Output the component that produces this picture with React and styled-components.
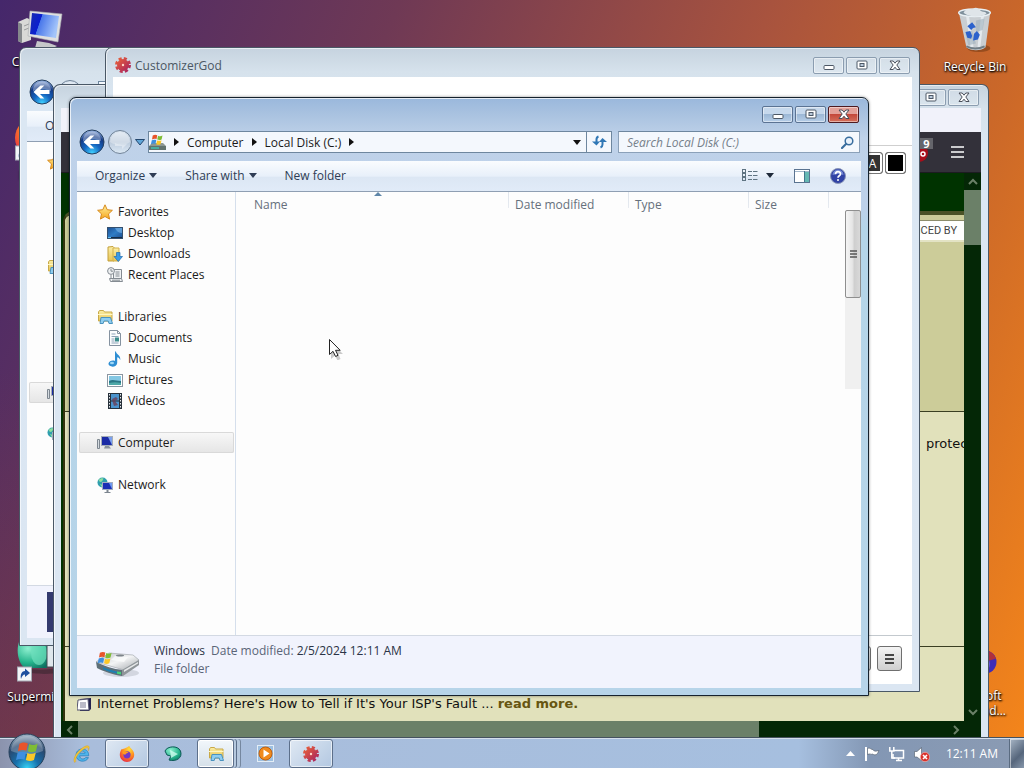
import React from "react";
import styled, { createGlobalStyle, css } from "styled-components";

const GlobalStyle = createGlobalStyle`
  * {
    box-sizing: border-box;
  }

  body {
    margin: 0;
    overflow: hidden;
    font-family: "Open Sans", "Noto Sans", sans-serif;
    font-size: 12px;
    color: #1b1b1b;
  }

  button, input {
    font: inherit;
    color: inherit;
    margin: 0;
    padding: 0;
    border: 0;
    background: none;
  }

  ul {
    list-style: none;
    margin: 0;
    padding: 0;
  }

  svg {
    display: block;
    flex: none;
  }
`;

const Screen = styled.div`
  height: 100vh;
  display: flex;
  flex-direction: column;
  background: linear-gradient(112deg, #45276b 0%, #6f3955 30%, #a8533e 58%, #cb6829 78%, #f5861a 100%);
`;

const Desktop = styled.main`
  flex: 1;
  position: relative;
  overflow: hidden;
  background: linear-gradient(to bottom, transparent 50%, rgba(130, 60, 50, 0.35)) left / 60px 100% no-repeat;
`;

/* desktop icons */

const Shortcut = styled.button`
  position: absolute;
  top: ${(p) => p.$top}px;
  left: ${(p) => p.$left};
  right: ${(p) => p.$right};
  width: 74px;
  display: flex;
  flex-direction: column;
  align-items: center;
  gap: 6px;
  color: #fff;
  line-height: 15px;
  text-align: center;
  white-space: nowrap;
  text-shadow: 1px 1px 2px #000, 0 1px 2px #000;
`;

/* windows */

const Frame = styled.section`
  position: absolute;
  display: flex;
  flex-direction: column;
  top: ${(p) => p.$inset[0]}px;
  right: ${(p) => p.$inset[1]}px;
  bottom: ${(p) => p.$inset[2]}px;
  left: ${(p) => p.$inset[3]}px;
  padding: 0 7px ${(p) => (p.$docked ? 0 : 7)}px;
  border: 1px solid #4a5866;
  border-bottom-width: ${(p) => (p.$docked ? 0 : 1)}px;
  border-radius: 7px 7px 0 0;
  background: linear-gradient(#c6d3df, #d6e2ec 24px, #dbe7f3 60px, #dbe6f2);
  box-shadow: inset 1px 1px 0 rgba(255, 255, 255, 0.6);

  ${(p) =>
    p.$active &&
    css`
      border-color: #16222e;
      background: linear-gradient(#9ab8dc, #a9c2e0 16px, #bfd2e9 40px, #bdd1ea 110px, #b5d5e8 130px, #b7d4e9);
      box-shadow: inset 1px 1px 0 rgba(255, 255, 255, 0.75), 0 0 3px rgba(0, 0, 0, 0.45);
    `}
`;

const Caption = styled.header`
  height: ${(p) => p.$height}px;
  padding: ${(p) => p.$pad}px 2px 0;
  display: flex;
  align-items: flex-start;
  gap: 2px;
`;

const CaptionTitle = styled.h1`
  flex: 1;
  display: flex;
  align-items: center;
  gap: 4px;
  height: 16px;
  margin: 0;
  font-size: 12px;
  font-weight: 400;
  color: #4b5763;
`;

const CaptionButton = styled.button`
  width: 31px;
  height: 17px;
  display: flex;
  align-items: center;
  justify-content: center;
  border: 1px solid ${(p) => (p.$active ? "#5b7393" : "#8b9db0")};
  border-radius: 2px;
  background: ${(p) =>
    p.$active ? "linear-gradient(#c6d8ec 45%, #9db8d6 50%, #b6cee8)" : "rgba(255, 255, 255, 0.15)"};
  box-shadow: inset 0 0 0 1px rgba(255, 255, 255, 0.45);

  ${(p) =>
    p.$danger &&
    css`
      border-color: #4d1a20;
      background: linear-gradient(#e3a199 45%, #c4493b 50%, #d4705c);
    `}
`;

/* explorer */

const NavRow = styled.div`
  height: 24px;
  margin-bottom: 7px;
  padding: 0 1px 0 2px;
  display: flex;
  align-items: center;
`;

const NavButton = styled.button`
  height: 26px;
  margin-right: 2px;
`;

const AddressBar = styled.div`
  flex: 1;
  height: 22px;
  display: flex;
  align-items: center;
  margin: 0 6px 0 3px;
  border: 1px solid #6e879f;
  background: #f4f8fd;
`;

const Crumb = styled.button`
  display: flex;
  align-items: center;
  gap: 8px;
  padding-left: 8px;
  white-space: nowrap;
`;

const AddressEnd = styled.div`
  flex: 1;
  display: flex;
  justify-content: flex-end;
  padding-right: 5px;
`;

const RefreshButton = styled.button`
  width: 25px;
  height: 20px;
  display: flex;
  align-items: center;
  justify-content: center;
  border-left: 1px solid #6e879f;
`;

const SearchBox = styled.label`
  width: 242px;
  height: 22px;
  display: flex;
  align-items: center;
  padding: 0 5px 0 8px;
  border: 1px solid #8ba1b9;
  border-top-color: #6e879f;
  background: #f4f8fd;
`;

const SearchInput = styled.input`
  flex: 1;
  min-width: 0;
  outline: 0;

  &::placeholder {
    color: #76808a;
    font-style: italic;
    opacity: 1;
  }
`;

const CommandBar = styled.div`
  height: 31px;
  padding: 0 15px 1px 18px;
  display: flex;
  align-items: center;
  gap: 28px;
  border-bottom: 1px solid #8f9fb3;
  background: linear-gradient(#fafcfe, #e8f0fa 50%, #dce7f4 55%, #e1ebf8);
  color: #2f3d55;
`;

const Command = styled.button`
  display: flex;
  align-items: center;
  gap: 4px;
  white-space: nowrap;
`;

const CommandIcons = styled.div`
  margin-left: auto;
  display: flex;
  align-items: center;
  gap: 20px;
`;

const ExplorerBody = styled.div`
  flex: 1;
  min-height: 0;
  display: flex;
  background: #fdfdfd;
`;

const Sidebar = styled.nav`
  width: 159px;
  padding: 9px 1px 0 2px;
  border-right: 1px solid #d5dfec;
  overflow: hidden;
`;

const Group = styled.ul`
  margin-bottom: 21px;
`;

const Place = styled.button`
  width: 100%;
  height: 21px;
  display: flex;
  align-items: center;
  gap: 5px;
  padding-left: ${(p) => (p.$nested ? 28 : 18)}px;
  white-space: nowrap;

  ${(p) =>
    p.$selected &&
    css`
      border-radius: 2px;
      box-shadow: inset 0 0 0 1px #d9d9d9;
      background: linear-gradient(#f8f8f8, #e5e5e5);
    `}
`;

const FileArea = styled.div`
  flex: 1;
  min-width: 0;
`;

const FileTable = styled.table`
  width: 593px;
  table-layout: fixed;
  border-collapse: collapse;
`;

const HeadCell = styled.th`
  width: ${(p) => p.$width}px;
  height: 26px;
  padding: 0 0 1px ${(p) => p.$pad}px;
  font-weight: 400;
  text-align: left;
  color: #66707c;
  background: linear-gradient(#dfe5ec, #e6eaf0) right top / 1px 16px no-repeat;
`;

const SortMark = styled.svg`
  position: absolute;
  margin: -4px 0 0 120px;
`;

const ScrollTrack = styled.div`
  width: 16px;
  height: 179px;
  margin-top: 18px;
  background: #f0f0f0;
`;

const ScrollThumb = styled.div`
  height: 88px;
  display: flex;
  align-items: center;
  justify-content: center;
  border: 1px solid #8f8f8f;
  border-radius: 2px;
  background: linear-gradient(to right, #f5f5f5, #e6e6e6 45%, #cfcfcf 60%, #d9d9d9);
`;

const Details = styled.footer`
  height: 53px;
  padding: 6px 18px 0;
  display: flex;
  gap: 14px;
  border-top: 1px solid #d3d9e3;
  background: #f1f3fd;
  color: #5a6578;
  line-height: 18px;
`;

const DetailText = styled.div`
  white-space: nowrap;
`;

const DetailValue = styled.span`
  color: #2b3346;
  margin-right: 6px;
`;

const Thumbnail = styled.div`
  width: 44px;
  height: 40px;
  margin-left: 2px;
  background: #333a6e;
`;

/* customizer */

const Customizer = styled.div`
  flex: 1;
  display: flex;
  flex-direction: column;
  background: #fff;
`;

const CustomizerTop = styled.div`
  height: 69px;
  border-bottom: 1px solid #cfcfcf;
`;

const Swatches = styled.div`
  flex: 1;
  display: flex;
  justify-content: flex-end;
  gap: 2px;
  padding: 6px 6px 0;
`;

const Swatch = styled.button`
  width: 21px;
  height: 22px;
  border: 1px solid #777;
  border-radius: 3px;
  box-shadow: inset 0 0 0 2px #fff;
  background: ${(p) => p.$fill};
  color: #fff;
`;

const CustomizerFoot = styled.div`
  height: 49px;
  display: flex;
  justify-content: flex-end;
  gap: 6px;
  padding: 10px 10px 0;
  border-top: 1px solid #c3c9ce;
`;

const FootButton = styled.button`
  width: 25px;
  height: 25px;
  display: flex;
  align-items: center;
  justify-content: center;
  border: 1px solid #6f6f6f;
  border-radius: 3px;
  background: linear-gradient(#f4f4f4, #cfcfcf);
`;

/* browser */

const TabStrip = styled.div`
  height: 24px;
  background: #f1f2fa;
`;

const BrowserBar = styled.div`
  height: 41px;
  display: flex;
  align-items: center;
  justify-content: flex-end;
  gap: 18px;
  padding-right: 17px;
  border-bottom: 1px solid #1d1c22;
  background: #33313a;
`;

const Extension = styled.div`
  position: relative;
  width: 24px;
  height: 24px;
`;

const Count = styled.span`
  position: absolute;
  top: -2px;
  right: 0;
  width: 13px;
  background: #65656b;
  color: #fff;
  font-size: 11px;
  font-weight: 700;
  line-height: 11px;
  text-align: center;
`;

const Viewport = styled.div`
  flex: 1;
  min-height: 0;
  display: grid;
  grid-template: minmax(0, 1fr) 17px / minmax(0, 1fr) 17px;
  font-family: "DejaVu Sans", sans-serif;
  font-size: 13px;
  color: #111;
`;

const Page = styled.article`
  display: flex;
  flex-direction: column;
  background: #003300;
`;

const Masthead = styled.div`
  height: 38px;
`;

const PageBody = styled.div`
  flex: 1;
  display: flex;
  flex-direction: column;
  margin-left: 2px;
  border-top: 4px solid #4b5226;
  border-left: 2px solid #33330f;
  border-top-left-radius: 10px;
  background: #e1e1bb;
`;

const Promo = styled.div`
  height: 197px;
  padding-top: 5px;
  border-bottom: 1px solid #3a3f22;
  border-top-left-radius: 8px;
  background: #cccc99;
`;

const Sponsor = styled.div`
  height: 22px;
  padding-right: 7px;
  margin-left: 30px;
  border-top: 1px solid #8d8d6c;
  border-bottom: 2px solid #e3e3c4;
  background: #fff;
  color: #444;
  font: 400 11px/20px Roboto, sans-serif;
  text-align: right;
`;

const Story = styled.div`
  flex: 1;
  padding-top: 22px;
  border-bottom: 1px solid #3a3f22;
  line-height: 20px;
  text-align: right;
  white-space: nowrap;
  overflow: hidden;
`;

const StoryEnd = styled.span`
  display: inline-block;
  width: 38px;
  text-align: left;
`;

const Headline = styled.div`
  height: 74px;
  display: flex;
  align-items: flex-end;
  gap: 5px;
  padding: 0 0 8px 12px;
  line-height: 18px;
  white-space: nowrap;
`;

const ReadMore = styled.a`
  color: #665511;
  font-weight: 700;
  text-decoration: none;
`;

const PageScroll = styled.div`
  display: flex;
  flex-direction: ${(p) => (p.$across ? "row" : "column")};
  align-items: center;
  justify-content: space-between;
  grid-column: ${(p) => (p.$across ? "1 / 3" : "2")};
  background: #042706;
  padding: ${(p) => (p.$across ? "0 20px 0 4px" : "4px 0")};
`;

const PageThumb = styled.div`
  background: #6b8068;
  align-self: stretch;
  flex: ${(p) => p.$flex};
  margin: ${(p) => p.$margin};
`;

/* taskbar */

const Taskbar = styled.footer`
  position: relative;
  height: 30px;
  display: flex;
  align-items: stretch;
  padding-left: 59px;
  border-top: 1px solid #d3deeb;
  background: linear-gradient(to right, #8b93ad, #a9bddb 8%, #a6bfdf 78%, #8397b4 85%, #8b9bb3);
  box-shadow: 0 -1px 0 #45525f;
`;

const StartButton = styled.button`
  position: absolute;
  left: 8px;
  top: -6px;
`;

const TaskList = styled.div`
  flex: 1;
  display: flex;
  gap: 2px;
`;

const Task = styled.button`
  width: 44px;
  display: flex;
  align-items: center;
  justify-content: center;
  border-radius: 3px;

  ${(p) =>
    p.$open &&
    css`
      border: 1px solid #5c6f8a;
      background: linear-gradient(135deg, #dfe8f3, #b3c8e1);
      box-shadow: inset 0 0 0 1px rgba(255, 255, 255, 0.6);
    `}

  ${(p) =>
    p.$stacked &&
    css`
      width: 37px;
      margin-right: 7px;
      background: linear-gradient(#f2f7fb, #d5e0e9);
      box-shadow: inset 0 0 0 1px #fff, 2px 0 0 #b5c8de, 3px 0 0 #5c6f8a, 6px 0 0 #b5c8de, 7px 0 0 #75879f;
    `}
`;

const Tray = styled.div`
  display: flex;
  align-items: center;
  gap: 9px;
`;

const Clock = styled.time`
  margin: 0 2px 0 7px;
  color: #fff;
  white-space: nowrap;
`;

const ShowDesktop = styled.button`
  width: 15px;
  align-self: stretch;
  border: 1px solid #5a6b80;
  border-width: 0 0 0 1px;
  background: linear-gradient(135deg, #a8b6c6, #56667c 60%, #8797ab);
  box-shadow: inset 1px 1px 0 rgba(255, 255, 255, 0.5);
`;

const Pointer = styled.svg`
  position: absolute;
  left: 328px;
  top: 338px;
`;

const Gradients = styled.svg`
  position: absolute;
`;

/* drawings */

const Defs = () => (
  <Gradients width="0" height="0" aria-hidden="true">
    <defs>
      <linearGradient id="screenBlue" x1="0" y1="0" x2="1" y2="0.3">
        <stop offset="0" stopColor="#1a2cae" />
        <stop offset=".4" stopColor="#0a1fd0" />
        <stop offset=".42" stopColor="#4a78ea" />
        <stop offset="1" stopColor="#a3c4fa" />
      </linearGradient>
      <radialGradient id="navBlue" cx=".5" cy=".95" r=".9">
        <stop offset="0" stopColor="#3fd0ff" />
        <stop offset=".4" stopColor="#1566c0" />
        <stop offset=".75" stopColor="#143a86" />
        <stop offset="1" stopColor="#8ba8d8" />
      </radialGradient>
      <linearGradient id="navGrey" x1="0" y1="0" x2="0" y2="1">
        <stop offset="0" stopColor="#dce7f2" />
        <stop offset=".5" stopColor="#bccbdc" />
        <stop offset="1" stopColor="#dce9f5" />
      </linearGradient>
      <linearGradient id="star" x1="0" y1="0" x2="0" y2="1">
        <stop offset="0" stopColor="#fff3a0" />
        <stop offset="1" stopColor="#f5a51c" />
      </linearGradient>
      <linearGradient id="metal" x1="0" y1="0" x2="1" y2="1">
        <stop offset="0" stopColor="#b9bec2" />
        <stop offset=".5" stopColor="#f3f4f5" />
        <stop offset="1" stopColor="#a3a8ac" />
      </linearGradient>
      <radialGradient id="orb" cx=".5" cy=".95" r=".95">
        <stop offset="0" stopColor="#37d3f5" />
        <stop offset=".35" stopColor="#1870ab" />
        <stop offset=".7" stopColor="#28486f" />
        <stop offset="1" stopColor="#a8bccb" />
      </radialGradient>
      <radialGradient id="fox" cx=".65" cy=".2" r=".9">
        <stop offset="0" stopColor="#ffdf3b" />
        <stop offset=".5" stopColor="#ff8a1d" />
        <stop offset="1" stopColor="#e5254b" />
      </radialGradient>
      <linearGradient id="gear" x1="0" y1="0" x2="1" y2="1">
        <stop offset="0" stopColor="#e8603a" />
        <stop offset="1" stopColor="#a8245f" />
      </linearGradient>
      <radialGradient id="teal" cx=".35" cy=".25" r=".9">
        <stop offset="0" stopColor="#8ff0d0" />
        <stop offset=".6" stopColor="#25b48c" />
        <stop offset="1" stopColor="#0d6e60" />
      </radialGradient>
      <linearGradient id="folder" x1="0" y1="0" x2="0" y2="1">
        <stop offset="0" stopColor="#fbeea6" />
        <stop offset="1" stopColor="#e7c455" />
      </linearGradient>
      <linearGradient id="sky" x1="0" y1="0" x2="1" y2="1">
        <stop offset="0" stopColor="#1c4f93" />
        <stop offset=".5" stopColor="#2f7dc6" />
        <stop offset="1" stopColor="#1c4d8e" />
      </linearGradient>
    </defs>
  </Gradients>
);

const Flag = () => (
  <>
    <path d="M1 2c2.500-1.300 4-1.200 6-.2L6 7C4.200 6.200 2.400 6.200 0 7.300z" fill="#e8542a" />
    <path d="M8 2.200c2 1 3.600 1 6-.2L12.800 7.300C10.600 8.300 9 8.200 7 7.400z" fill="#7fbd35" />
    <path d="M-.3 8.400c2.300-1 4-1 6-.2L4.600 13.400c-2-.9-3.700-.8-6 .2z" fill="#3e8fe0" />
    <path d="M6.700 8.500c2 .9 3.600.9 6-.1L11.400 13.600c-2.200 1.100-3.700.9-5.800 0z" fill="#fbc829" />
  </>
);

const Caret = ({ color = "#1f2a3a" }) => (
  <svg width="8" height="5">
    <path d="M0 0h8L4 5z" fill={color} />
  </svg>
);

const CrumbArrow = () => (
  <svg width="5" height="8">
    <path d="M0 0l5 4-5 4z" fill="#111" />
  </svg>
);

const MinimizeGlyph = () => (
  <svg width="12" height="11">
    <rect x="1" y="5.500" width="10" height="4" rx="1" fill="#fff" stroke="#4d5866" />
  </svg>
);

const MaximizeGlyph = () => (
  <svg width="12" height="11">
    <rect x="1" y="1" width="10" height="8" rx="1" fill="#fff" stroke="#4d5866" />
    <rect x="4" y="3.500" width="4" height="3" fill="#b9c9da" stroke="#4d5866" />
  </svg>
);

const CloseGlyph = () => (
  <svg width="12" height="11">
    <path
      d="M1 1h3.200L6 3.200 7.800 1H11L7.800 5l3.200 4.500H7.800L6 7.200 4.200 9.500H1L4.200 5z"
      fill="#fff"
      stroke="#4a4f5a"
      strokeLinejoin="round"
    />
  </svg>
);

const BackIcon = () => (
  <svg width="26" height="26">
    <circle cx="13" cy="13" r="12" fill="url(#navBlue)" stroke="#25405f" />
    <path d="M4 12C4 6 8 2.500 13 2.500S22 6 22 12c-5-2-12-2-18 0z" fill="#fff" opacity=".35" />
    <path d="M4.500 13l7-6.500h3.800L11 11h9.500v4H11l4.300 4.500h-3.800z" fill="#fff" />
  </svg>
);

const ForwardIcon = () => (
  <svg width="26" height="26">
    <circle cx="13" cy="13" r="11.500" fill="url(#navGrey)" stroke="#6f8297" />
    <path d="M3 13a10 10 0 0 1 20 0c-5 4-15 4-20 0z" fill="#fff" opacity=".3" />
    <path d="M20 15l-5 5v-3H8v-3c3 2 8 2 12 1z" fill="#e6edf4" opacity=".7" />
  </svg>
);

const HistoryCaret = () => (
  <svg width="10" height="7">
    <path d="M.5.500h9L5 6z" fill="#5fa6d8" stroke="#24476e" />
  </svg>
);

const SystemDrive = () => (
  <svg width="17" height="17" viewBox="0 0 17 17">
    <path d="M0 12l3-3h11l3 3v4H0z" fill="#8b9794" />
    <path d="M0 12h17v4H0z" fill="#62736f" />
    <path d="M2 14h8" stroke="#43c0b0" strokeWidth="1.500" />
    <g transform="translate(3 0) scale(.75)">
      <Flag />
    </g>
  </svg>
);

const BigDrive = () => (
  <svg width="45" height="38" viewBox="0 0 45 38">
    <ellipse cx="26" cy="31" rx="18" ry="4" fill="#9aa0a8" opacity=".35" />
    <path d="M1 20l13-9 24 2 6 5-15 10z" fill="url(#metal)" stroke="#9aa0a5" strokeWidth=".6" />
    <path d="M1 20c8 4 18 7 26 8v6C18 33 8 29 2 26z" fill="#5f7078" />
    <path d="M27 28l17-10v5L28 34h-1z" fill="#8f9599" />
    <path d="M29 28l14-8v1.500L29 30z" fill="#e7e9ea" />
    <path d="M8 25c5 2 10 3.500 14 4.500v2C17 30.500 12 29 8 27z" fill="#1f7fb0" />
    <path d="M22 29.500l4 .6v2.400l-4-.8z" fill="#43d37a" />
    <path d="M20 14l13 1-4 5-13-2z" fill="#fafbfb" opacity=".8" />
    <ellipse cx="25" cy="13.500" rx="4" ry="1" fill="#7d848a" />
    <g transform="translate(4 9) scale(.9)">
      <Flag />
    </g>
  </svg>
);

const RefreshIcon = () => (
  <svg width="15" height="14">
    <path d="M4.500 9V4.500C4.500 3 5 2 6.500 1.500M10.500 5v4.500c0 1.500-.8 2.500-2 3" fill="none" stroke="#2f77b5" strokeWidth="2" />
    <path d="M0 6.500h8L4.500 10.500zM7 7l3.500-4L15 7z" fill="#2f77b5" />
  </svg>
);

const SearchIcon = () => (
  <svg width="13" height="13">
    <circle cx="8" cy="5" r="3.800" fill="#e9f2fb" stroke="#386d9e" strokeWidth="1.500" />
    <path d="M5 8l-4 4" stroke="#386d9e" strokeWidth="2.200" strokeLinecap="round" />
  </svg>
);

const ViewIcon = () => (
  <svg width="16" height="13" stroke="#5f7482" fill="none">
    {[1.5, 5.5, 9.5].map((y) => (
      <g key={y}>
        <rect x=".5" y={y - 1} width="3" height="3" />
        <path d={`M6 ${y + 1}h4M11 ${y + 1}h4.500`} />
      </g>
    ))}
  </svg>
);

const PaneIcon = () => (
  <svg width="16" height="14">
    <rect x=".5" y=".5" width="15" height="13" fill="#fff" stroke="#5a7390" />
    <path d="M1 2.500h14" stroke="#a5b9cc" />
    <path d="M10 3h5v10h-5z" fill="#65b8b4" />
    <path d="M10.500 2v11" stroke="#43778c" />
  </svg>
);

const HelpIcon = () => (
  <svg width="16" height="16">
    <circle cx="8" cy="8" r="7.500" fill="#3143a5" stroke="#8a96b8" />
    <path d="M2.500 7a5.500 5.500 0 0 1 11 0c-3-1.500-8-1.500-11 0z" fill="#8fa4e6" opacity=".7" />
    <path d="M5.500 6.200c0-3.300 5-3.300 5-.3C10.500 7.800 8 7.800 8 9.800" fill="none" stroke="#fff" strokeWidth="1.700" />
    <circle cx="8" cy="12" r="1" fill="#fff" />
  </svg>
);

const StarIcon = () => (
  <svg width="16" height="16">
    <path
      d="M8 .8l2.200 4.900 5.200.6-3.900 3.600 1.100 5.200L8 12.500l-4.600 2.600 1.100-5.200L.6 6.300l5.200-.6z"
      fill="url(#star)"
      stroke="#d78a1e"
    />
  </svg>
);

const DesktopIcon = () => (
  <svg width="16" height="16">
    <rect x=".5" y="2.500" width="15" height="11" fill="url(#sky)" stroke="#34506e" />
    <path d="M8 3h7v5C12 8 9 6 8 3z" fill="#7fb7ea" opacity=".6" />
    <path d="M1 12.500h14" stroke="#162c46" />
    <path d="M1 12.500h3" stroke="#5fc0f0" />
  </svg>
);

const DownloadsIcon = () => (
  <svg width="16" height="16">
    <path d="M1 1l5-.5 1 1V15H1z" fill="url(#folder)" stroke="#c39f3a" />
    <path d="M6 2h6v13H6z" fill="url(#folder)" stroke="#d3b14a" />
    <path d="M9.500 6.500h3.500v4h2.500l-4.200 5-4.300-5h2.500z" fill="#3b9be6" stroke="#1f6cb0" strokeWidth=".7" />
  </svg>
);

const RecentIcon = () => (
  <svg width="16" height="16" fill="#eef0f2" stroke="#848b92">
    <path d="M6.500 2.500h8v9h-8z" />
    <path d="M2.500 11.500h12l1 3h-12z" />
    <path d="M8.500 5h4M8.500 7h4M8.500 9h4M5 13.200h8" />
    <circle cx="4" cy="4" r="3.400" />
    <path d="M4 2v2.200h2M4 8v3" fill="none" />
  </svg>
);

const LibrariesIcon = () => (
  <svg width="16" height="16">
    <path d="M1.500 3l1-1.500h4L7.500 3h7.500v9h-13.500z" fill="url(#folder)" stroke="#c8a948" />
    <path d="M1 5.500h14.500" stroke="#fff6c2" />
    <path d="M3 14.500l1-6h9.500l2 6H12l-.8-2.500H7l-.8 2.500z" fill="#8ecdf0" stroke="#4a93bf" />
  </svg>
);

const DocumentsIcon = () => (
  <svg width="16" height="16">
    <path d="M2.500.500h8l3 3v12h-11z" fill="#fbfcfd" stroke="#8592a0" />
    <path d="M10.500.500v3h3" fill="none" stroke="#8592a0" />
    <path d="M4.500 4h4M4.500 6.500h7M4.500 9h3M4.500 11h3M4.500 13h7" stroke="#8da3b8" />
    <rect x="8" y="7.500" width="4" height="4" fill="#3b8c8b" />
  </svg>
);

const MusicIcon = () => (
  <svg width="16" height="16">
    <path d="M9 .5c0 3 5 3.500 4.200 8.500-.8-2.200-2-2.500-3-2.700V12C10 17 1 16.500 1.500 12.500 2 9.700 6 9 8 10V.500z" fill="#2e8ed3" />
    <ellipse cx="5" cy="12" rx="2" ry="1.200" fill="#9ed7f7" />
  </svg>
);

const PicturesIcon = () => (
  <svg width="16" height="16">
    <rect x=".5" y="2.500" width="15" height="12" fill="#fff" stroke="#8b96a1" />
    <rect x="2" y="4" width="12" height="9" fill="#83c7e3" />
    <path d="M2 9c4-2 7 0 12 0v4H2z" fill="#2b7685" />
    <path d="M2 11c4-1 8-1 12 0v2H2z" fill="#4fa9a8" />
  </svg>
);

const VideosIcon = () => (
  <svg width="16" height="16">
    <rect x="1" y="0" width="14" height="16" fill="#27313b" />
    <rect x="4" y="1" width="8" height="6.500" fill="#4b93cc" />
    <rect x="4" y="8.500" width="8" height="6.500" fill="#4b93cc" />
    <path d="M5 6l4-2 2 2-3 2 3 4-4 1-1-3z" fill="#6d3a4f" opacity=".75" />
    <path d="M2.500 1v14M13.500 1v14" stroke="#e6eaee" strokeDasharray="1.500 1.500" />
  </svg>
);

const ComputerIcon = () => (
  <svg width="16" height="16">
    <path d="M.5 4.500h2v9h-2z" fill="#d5dbe0" stroke="#7d868f" />
    <rect x="4.500" y="1.500" width="11" height="9" fill="#1b2ba5" stroke="#a4adb8" />
    <path d="M11 2h4v8z" fill="#7ba0ee" />
    <path d="M8 11h4l2 2.500H7z" fill="#8a939c" />
  </svg>
);

const NetworkIcon = () => (
  <svg width="16" height="16">
    <circle cx="5.500" cy="5.500" r="5" fill="#2f9fae" />
    <path d="M1.500 3c2-2 3.500-2 5-1.500L5 4.500l-2 .5zM3 7l3 1-1 2.500z" fill="#8fe0a0" />
    <rect x="5.500" y="5.500" width="10" height="7" fill="#1b2fb5" stroke="#a2abc0" />
    <path d="M12 6h3v6z" fill="#6f9af0" />
    <path d="M9.500 13h2v2h2v1h-6v-1h2z" fill="#7d8690" />
  </svg>
);

const GearIcon = () => (
  <svg width="16" height="16" viewBox="0 0 16 16">
    <circle cx="8" cy="8" r="6" fill="url(#gear)" />
    <circle cx="8" cy="8" r="6.500" fill="none" stroke="url(#gear)" strokeWidth="3" strokeDasharray="3 2.105" />
    <circle cx="8" cy="8" r="1.200" fill="#ffd9c9" />
  </svg>
);

const BigComputer = () => (
  <svg width="46" height="38" viewBox="0 0 46 38">
    <path d="M1 12l9-4 4 2v20l-9 3-4-2z" fill="#d9d9d7" />
    <path d="M1 12l4 2v19l-4-2z" fill="#85888c" />
    <path d="M7 16l5-2M7 20l5-2" stroke="#9a9c9e" />
    <path d="M13 1l32 3-4 28-30-6z" fill="#dfe0e0" stroke="#a9acb0" strokeWidth=".6" />
    <path d="M15 3l27 3-3 22-26-4z" fill="url(#screenBlue)" />
    <path d="M20 31l12 2 8 3-4 2H18z" fill="#c6c8c9" />
  </svg>
);

const RecycleBin = () => (
  <svg width="38" height="46" viewBox="0 0 38 48">
    <ellipse cx="23" cy="43" rx="12" ry="4" fill="#6a3310" opacity=".5" />
    <path d="M2 5h33l-5 37c-4 4-16 4-20 0z" fill="#c9d6df" opacity=".93" />
    <path d="M11 8l5 34M27 8l-4 35" stroke="#f7fbff" strokeWidth="3" opacity=".6" />
    <path d="M20 14l9-2-2 12-7 2zM9 28l7-3 4 13-8 2z" fill="#9eb0bd" opacity=".6" />
    <ellipse cx="18.500" cy="6" rx="16.500" ry="4" fill="#7e8f9b" stroke="#e9f0f4" strokeWidth="1.500" />
    <path d="M7 6c3-6 7-1 10-4s6 0 8 2 5 0 6 3c-6 4-18 4-24-1z" fill="#dfe5e9" />
    <g fill="#2c62cc">
      <path d="M11 20l5-4 4 5-3 1-2 2z" />
      <path d="M9 26l5-1 2 5-1 3-4-1z" />
      <path d="M18 28l3-3 3 4-2 5-5 1z" />
    </g>
    <path d="M10 41c5 3 13 3 19 0" stroke="#707d85" strokeWidth="2" fill="none" />
  </svg>
);

const ShortcutMark = () => (
  <>
    <rect x=".5" y="26" width="14" height="14" fill="#f3f5f8" stroke="#a5aab5" />
    <path d="M4 38c-1-5 1-8 4-8v-2.500l5 4.500-5 4v-2.500c-2 0-3 1.500-4 4.500z" fill="#1e4f9e" />
  </>
);

const SupermiumIcon = () => (
  <svg width="46" height="42" viewBox="0 0 46 42">
    <path d="M4 26c8 3 26 4 40 0v5c-10 3-28 2-36 0z" fill="#3b2630" opacity=".6" />
    <path d="M2 1h28v26H8C1 22-1 10 2 1z" fill="url(#teal)" />
    <ellipse cx="22" cy="12" rx="8" ry="12" fill="#6fe0bd" opacity=".7" />
    <path d="M30 2h15v24H30z" fill="#dfe7ec" stroke="#454a52" />
    <ShortcutMark />
  </svg>
);

const FirefoxShortcut = () => (
  <svg width="46" height="41" viewBox="0 0 46 41">
    <circle cx="20" cy="18" r="20" fill="url(#fox)" />
    <circle cx="22" cy="20" r="9" fill="#7137c8" />
    <ShortcutMark />
  </svg>
);

const PurpleBall = () => (
  <svg width="44" height="38" viewBox="0 0 44 38">
    <circle cx="32" cy="18" r="11.500" fill="#3f2cb8" />
    <path d="M32 6.500a11.500 11.500 0 0 1 11 8L32 18z" fill="#b0303c" />
    <circle cx="30" cy="20" r="7" fill="#6a57dc" />
  </svg>
);

const FoxIcon = () => (
  <svg width="16" height="16" viewBox="0 0 20 20">
    <path d="M3 4c2 0 2-1 4-1 3-1 4-2 6-3 0 3 6 4 6 11 0 5-4 9-9 9s-9-4-9-9c0-3 1-5 2-7z" fill="url(#fox)" />
    <circle cx="10" cy="11" r="4.500" fill="#7137c8" />
    <path d="M4 7c3-2 6 0 8 1-2 1-4 1-4 3-2 0-4-1-4-4z" fill="#ff9a22" />
  </svg>
);

const IEIcon = () => (
  <svg width="19" height="18" viewBox="0 0 20 20">
    <path d="M18 12H8c0 4 5 4.500 6.500 2h3.200c-2.200 6-13.700 5.500-13.700-3C4 2 18.500 2 18 12zM8 9h6c-.5-3-5.500-3-6 0z" fill="#4fb4ea" stroke="#1d78b6" strokeWidth=".7" />
    <path d="M2.500 19.500C-1 16 6 5 14 1.500c5-1.800 5.500 1 3.500 5C18 3 17 2.500 14.500 3.500 8 6.500 2 15 3.800 18z" fill="#f2c53a" stroke="#c79420" strokeWidth=".4" />
  </svg>
);

const TealIcon = () => (
  <svg width="18" height="16" viewBox="0 0 18 16">
    <path d="M1 5C3 0 14-1 16.500 5 19 12 12 16 5 14l2-4L3 9z" fill="url(#teal)" stroke="#0e5a58" />
    <path d="M6 4l8 4-7 4z" fill="#d5fff2" opacity=".75" />
  </svg>
);

const PlayerIcon = () => (
  <svg width="17" height="17">
    <rect x=".5" y=".5" width="16" height="16" fill="#9dbfe0" stroke="#e3edf6" />
    <circle cx="8.500" cy="8.500" r="6.500" fill="#f08a1d" stroke="#c25e08" />
    <path d="M6.500 4.500l6 4-6 4z" fill="#fff" />
  </svg>
);

const StartOrb = () => (
  <svg width="38" height="38" viewBox="0 0 38 38">
    <circle cx="19" cy="19" r="18" fill="url(#orb)" stroke="#26405a" />
    <path d="M3 18A16 15 0 0 1 35 18c-9 4-23 4-32 0z" fill="#fff" opacity=".25" />
    <g transform="translate(10 8) scale(1.400)">
      <Flag />
    </g>
  </svg>
);

const TrayFlag = () => (
  <svg width="16" height="16">
    <path d="M2 1v14" stroke="#fff" strokeWidth="2" />
    <path d="M3.500 2.500C6 1 7 4 9 3.500c.5 2 3 2 6 1-1 2-1.500 3-2.500 4-2 .5-3 .5-3.500-.5-2 1-3-1-5.500.5z" fill="#fff" stroke="#4d5967" strokeWidth=".6" />
  </svg>
);

const TrayNetwork = () => (
  <svg width="16" height="16" fill="none" stroke="#fff" strokeWidth="1.500">
    <path d="M5 4.500h9.500v7.500H4V8M7 14.500h6M9.500 12v2" />
    <path d="M.8 1v4h4V1M2.800 5v7H6" />
  </svg>
);

const TrayVolume = () => (
  <svg width="16" height="16">
    <path d="M.5 5.500H3l4.500-4v13L3 11H.500z" fill="#fff" stroke="#4d5967" strokeWidth=".6" />
    <circle cx="11" cy="11" r="4.700" fill="#d8322c" stroke="#f5c2bd" strokeWidth=".6" />
    <path d="M9 9l4 4M13 9l-4 4" stroke="#fff" strokeWidth="1.600" />
  </svg>
);

const Chevron = ({ d }) => (
  <svg width="10" height="10">
    <path d={d} fill="none" stroke="#6b8068" strokeWidth="2" />
  </svg>
);

const Lines = ({ width, height, color = "#fff" }) => (
  <svg width={width} height={height}>
    {[1, height / 2, height - 1].map((y) => (
      <path key={y} d={`M0 ${y}h${width}`} stroke={color} strokeWidth="1.500" />
    ))}
  </svg>
);

function CaptionButtons({ active }) {
  return (
    <>
      <CaptionButton $active={active} aria-label="Minimize"><MinimizeGlyph /></CaptionButton>
      <CaptionButton $active={active} aria-label="Maximize"><MaximizeGlyph /></CaptionButton>
      <CaptionButton $active={active} $danger={active} aria-label="Close"><CloseGlyph /></CaptionButton>
    </>
  );
}

const places = [
  [
    { name: "Favorites", icon: StarIcon },
    { name: "Desktop", icon: DesktopIcon, nested: true },
    { name: "Downloads", icon: DownloadsIcon, nested: true },
    { name: "Recent Places", icon: RecentIcon, nested: true },
  ],
  [
    { name: "Libraries", icon: LibrariesIcon },
    { name: "Documents", icon: DocumentsIcon, nested: true },
    { name: "Music", icon: MusicIcon, nested: true },
    { name: "Pictures", icon: PicturesIcon, nested: true },
    { name: "Videos", icon: VideosIcon, nested: true },
  ],
  [{ name: "Computer", icon: ComputerIcon, selected: true }],
  [{ name: "Network", icon: NetworkIcon }],
];

function Explorer({ inset, active, children }) {
  return (
    <Frame $inset={inset} $active={active}>
      <Caption $height={32} $pad={8}>
        <CaptionTitle />
        <CaptionButtons active={active} />
      </Caption>
      <NavRow>
        <NavButton aria-label="Back"><BackIcon /></NavButton>
        <NavButton aria-label="Forward"><ForwardIcon /></NavButton>
        <HistoryCaret />
        <AddressBar>
          <SystemDrive />
          <Crumb><CrumbArrow />Computer</Crumb>
          <Crumb><CrumbArrow />Local Disk (C:)</Crumb>
          <Crumb aria-label="Folders"><CrumbArrow /></Crumb>
          <AddressEnd><Caret color="#111" /></AddressEnd>
          <RefreshButton aria-label="Refresh"><RefreshIcon /></RefreshButton>
        </AddressBar>
        <SearchBox>
          <SearchInput aria-label="Search" placeholder="Search Local Disk (C:)" />
          <SearchIcon />
        </SearchBox>
      </NavRow>
      <CommandBar>
        <Command>Organize <Caret color="#2f3d55" /></Command>
        <Command>Share with <Caret color="#2f3d55" /></Command>
        <Command>New folder</Command>
        <CommandIcons>
          <Command aria-label="Change view"><ViewIcon /><span /><Caret /></Command>
          <Command aria-label="Preview pane"><PaneIcon /></Command>
          <Command aria-label="Help"><HelpIcon /></Command>
        </CommandIcons>
      </CommandBar>
      <ExplorerBody>
        <Sidebar>
          {places.map((group) => (
            <Group key={group[0].name}>
              {group.map(({ name, icon: Icon, nested, selected }) => (
                <li key={name}>
                  <Place $nested={nested} $selected={selected}><Icon />{name}</Place>
                </li>
              ))}
            </Group>
          ))}
        </Sidebar>
        <FileArea>
          <FileTable>
            <thead>
              <tr>
                <HeadCell $width={273} $pad={18}>
                  <SortMark width="8" height="4"><path d="M0 4l4-4 4 4z" fill="#5f86a8" /></SortMark>
                  Name
                </HeadCell>
                <HeadCell $width={120} $pad={6}>Date modified</HeadCell>
                <HeadCell $width={120} $pad={6}>Type</HeadCell>
                <HeadCell $width={80} $pad={6}>Size</HeadCell>
              </tr>
            </thead>
          </FileTable>
        </FileArea>
        <ScrollTrack>
          <ScrollThumb><Lines width={7} height={8} color="#555" /></ScrollThumb>
        </ScrollTrack>
      </ExplorerBody>
      <Details>{children}</Details>
    </Frame>
  );
}

function Browser() {
  return (
    <Frame $inset={[84, 35, 0, 53]} $docked>
      <Caption $height={23} $pad={4}>
        <CaptionTitle />
        <CaptionButtons />
      </Caption>
      <TabStrip />
      <BrowserBar>
        <Extension>
          <svg width="24" height="24">
            <circle cx="10" cy="13" r="9" fill="#a80f1b" />
            <circle cx="14" cy="14" r="2" fill="none" stroke="#fff" strokeWidth="1.500" />
          </svg>
          <Count>9</Count>
        </Extension>
        <Lines width={13} height={12} />
      </BrowserBar>
      <Viewport>
        <Page>
          <Masthead />
          <PageBody>
            <Promo>
              <Sponsor>ENHANCED BY</Sponsor>
            </Promo>
            <Story>
              <StoryEnd>protect</StoryEnd>
            </Story>
            <Headline>
              <svg width="15" height="16">
                <path d="M3 2l11-1v11l-2 2H3z" fill="#23234f" />
                <path d="M1 3l10-1 1 11H0z" fill="#fff" stroke="#55556f" />
                <path d="M3 6h6M3 8h6M3 10h6" stroke="#77778f" />
              </svg>
              <span>
                Internet Problems? Here's How to Tell if It's Your ISP's Fault ... <ReadMore href="#">read more.</ReadMore>
              </span>
            </Headline>
          </PageBody>
        </Page>
        <PageScroll>
          <Chevron d="M1 7l4-4 4 4" />
          <PageThumb $flex="0 0 55px" $margin="3px 0 auto" />
          <Chevron d="M1 3l4 4 4-4" />
        </PageScroll>
        <PageScroll $across>
          <Chevron d="M7 1L3 5l4 4" />
          <PageThumb $flex="0 1 681px" $margin="0 auto 0 3px" />
          <Chevron d="M3 1l4 4-4 4" />
        </PageScroll>
      </Viewport>
    </Frame>
  );
}

export default function App() {
  return (
    <Screen>
      <GlobalStyle />
      <Defs />
      <Desktop>
        <Shortcut $top={10} $left="3px"><BigComputer />Computer</Shortcut>
        <Shortcut $top={120} $left="1px"><FirefoxShortcut />Firefox</Shortcut>
        <Shortcut $top={641} $left="3px"><SupermiumIcon />Supermium</Shortcut>
        <Shortcut $top={7} $right="12px"><RecycleBin />Recycle Bin</Shortcut>
        <Shortcut $top={644} $right="12px">
          <PurpleBall />
          <span>Microsoft<br />My Cloud...</span>
        </Shortcut>

        <Explorer inset={[47, 206, 92, 19]}>
          <Thumbnail />
        </Explorer>
        <Browser />
        <Frame $inset={[47, 104, 46, 105]}>
          <Caption $height={29} $pad={9}>
            <CaptionTitle><GearIcon />CustomizerGod</CaptionTitle>
            <CaptionButtons />
          </Caption>
          <Customizer>
            <CustomizerTop />
            <Swatches>
              <Swatch $fill="#333">A</Swatch>
              <Swatch $fill="#000" aria-label="Black" />
            </Swatches>
            <CustomizerFoot>
              <FootButton aria-label="Back" />
              <FootButton aria-label="Menu"><Lines width={9} height={10} color="#111" /></FootButton>
            </CustomizerFoot>
          </Customizer>
        </Frame>
        <Explorer inset={[97, 155, 42, 69]} active>
          <BigDrive />
          <DetailText>
            <DetailValue>Windows</DetailValue>Date modified: <DetailValue>2/5/2024 12:11 AM</DetailValue>
            <div>File folder</div>
          </DetailText>
        </Explorer>

        <Pointer width="16" height="22">
          <path d="M3 4v17l4-3.500 2.500 5 3-1.500-2-5H15z" fill="#000" opacity=".2" />
          <path d="M1.500 1.500v15l3.500-3.200 2.600 5.200 2.400-1.200-2.500-5h4.700z" fill="#fff" stroke="#222" />
        </Pointer>
      </Desktop>
      <Taskbar>
        <StartButton aria-label="Start"><StartOrb /></StartButton>
        <TaskList>
          <Task aria-label="Internet Explorer"><IEIcon /></Task>
          <Task $open aria-label="Firefox"><FoxIcon /></Task>
          <Task aria-label="Supermium"><TealIcon /></Task>
          <Task $open $stacked aria-label="Windows Explorer"><LibrariesIcon /></Task>
          <Task aria-label="Media Player"><PlayerIcon /></Task>
          <Task $open aria-label="CustomizerGod"><GearIcon /></Task>
        </TaskList>
        <Tray>
          <svg width="9" height="5"><path d="M0 5l4.500-5L9 5z" fill="#fff" /></svg>
          <TrayFlag />
          <TrayNetwork />
          <TrayVolume />
          <Clock>12:11 AM</Clock>
          <ShowDesktop aria-label="Show desktop" />
        </Tray>
      </Taskbar>
    </Screen>
  );
}
